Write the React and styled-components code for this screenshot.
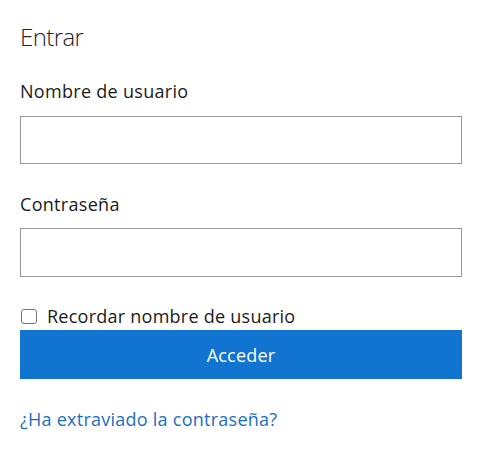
import styled, { createGlobalStyle } from 'styled-components';

const GlobalStyle = createGlobalStyle`
  html, body {
    margin: 0;
    padding: 0;
    background: #ffffff;
  }
  body {
    font-family: 'Segoe UI', 'Open Sans', sans-serif;
    color: #1b1b1b;
  }
`;

const Page = styled.main`
  width: 442px;
  padding: 21px 0 0 20px;
`;

const Title = styled.h1`
  margin: 0;
  font-size: 24px;
  line-height: 32px;
  font-weight: 300;
  letter-spacing: -0.6px;
  color: #262626;
`;

const Field = styled.div`
  display: flex;
  flex-direction: column;
  gap: ${(p) => p.gap}px;
  margin-top: ${(p) => p.top}px;
`;

const Label = styled.label`
  font-size: 18px;
  line-height: 24px;
  letter-spacing: 0.3px;
  color: #1b1b1b;
`;

const TextInput = styled.input`
  box-sizing: border-box;
  width: 100%;
  height: ${(p) => p.h}px;
  margin: 0;
  padding: 0 10px;
  border: 1px solid #999999;
  border-radius: 0;
  background: #ffffff;
  font: inherit;
  font-size: 18px;
  outline: none;
`;

const CheckRow = styled.label`
  display: flex;
  align-items: center;
  gap: 10px;
  margin-top: 27px;
  font-size: 18px;
  line-height: 24px;
  letter-spacing: 0.25px;
  color: #1b1b1b;
`;

const CheckBox = styled.span`
  box-sizing: border-box;
  width: 16px;
  height: 15px;
  margin-left: 1px;
  border: 1px solid #767676;
  border-radius: 3px;
  background: #ffffff;
`;

const SubmitButton = styled.button`
  display: block;
  width: 100%;
  height: 49px;
  margin-top: 2px;
  border: none;
  background: #1174d1;
  color: #ffffff;
  font: inherit;
  font-size: 18px;
  letter-spacing: 0.2px;
  cursor: pointer;
`;

const ForgotLink = styled.a`
  display: block;
  margin-top: 28px;
  font-size: 18px;
  line-height: 24px;
  letter-spacing: 0.25px;
  color: #1a6fc2;
  text-decoration: none;
`;

export default function App() {
  return (
    <>
      <GlobalStyle />
      <Page>
        <Title>Entrar</Title>
        <Field top={26} gap={13}>
          <Label htmlFor="user">Nombre de usuario</Label>
          <TextInput id="user" type="text" h={48} />
        </Field>
        <Field top={28} gap={12}>
          <Label htmlFor="pass">Contraseña</Label>
          <TextInput id="pass" type="password" h={49} />
        </Field>
        <CheckRow>
          <CheckBox />
          Recordar nombre de usuario
        </CheckRow>
        <SubmitButton type="button">Acceder</SubmitButton>
        <ForgotLink href="#">¿Ha extraviado la contraseña?</ForgotLink>
      </Page>
    </>
  );
}
